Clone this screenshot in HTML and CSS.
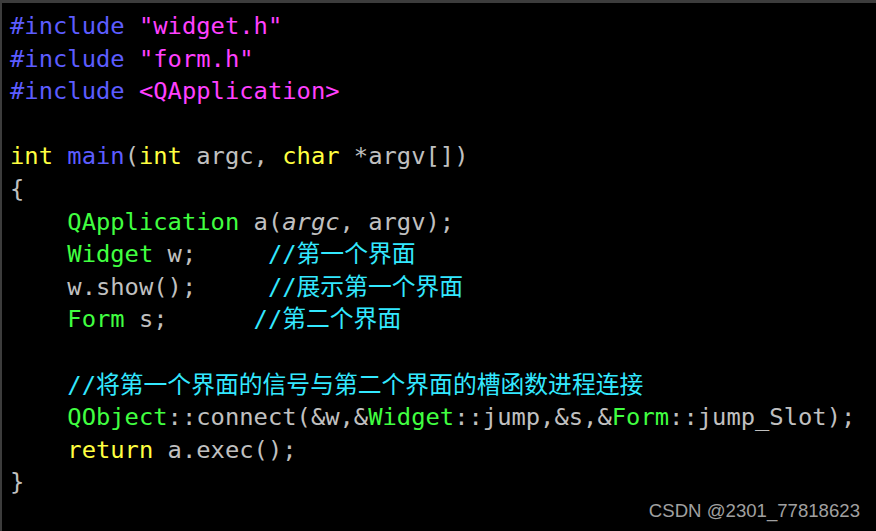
FILE: index.html
```html
<!DOCTYPE html>
<html>
<head>
<meta charset="utf-8">
<link rel="stylesheet" href="styles.css">
</head>
<body>
<div class="screen">
<pre class="code"><span class="pp">#include</span> <span class="str">"widget.h"</span>
<span class="pp">#include</span> <span class="str">"form.h"</span>
<span class="pp">#include</span> <span class="str">&lt;QApplication&gt;</span>

<span class="kw">int</span> <span class="fn">main</span>(<span class="kw">int</span> argc, <span class="kw">char</span> *argv[])
{
    <span class="ty">QApplication</span> a(<i>argc</i>, argv);
    <span class="ty">Widget</span> w;     <span class="cm">//第一个界面</span>
    w.show();     <span class="cm">//展示第一个界面</span>
    <span class="ty">Form</span> s;      <span class="cm">//第二个界面</span>

    <span class="cm">//将第一个界面的信号与第二个界面的槽函数进程连接</span>
    <span class="ty">QObject</span>::connect(&amp;w,&amp;<span class="ty">Widget</span>::jump,&amp;s,&amp;<span class="ty">Form</span>::jump_Slot);
    <span class="kw">return</span> a.exec();
}</pre>
<div class="mark">CSDN @2301_77818623</div>
</div>
</body>
</html>
```
FILE: styles.css
```css
html, body {
  margin: 0;
  padding: 0;
  background: #000;
}
.screen {
  position: relative;
  width: 876px;
  height: 531px;
  box-sizing: border-box;
  background: #000;
  border-top: 3px solid #3c3c3c;
  border-left: 2px solid #3c3c3c;
  overflow: hidden;
}
.code {
  margin: 0;
  padding: 7px 0 0 8px;
  font-family: "DejaVu Sans Mono", "Noto Sans CJK SC", monospace;
  font-size: 23.8px;
  line-height: 32.6px;
  color: #c0c0c0;
  white-space: pre;
}
.code i { font-style: italic; }
.pp { color: #5c5cff; }
.str { color: #ff40ff; }
.kw { color: #ffff40; }
.fn { color: #5c5cff; }
.ty { color: #40ff40; }
.cm { color: #33e8ff; }
.mark {
  position: absolute;
  right: 16px;
  bottom: 9px;
  font-family: "Liberation Sans", Arial, sans-serif;
  font-size: 18.6px;
  color: #a0a0a0;
}
```
